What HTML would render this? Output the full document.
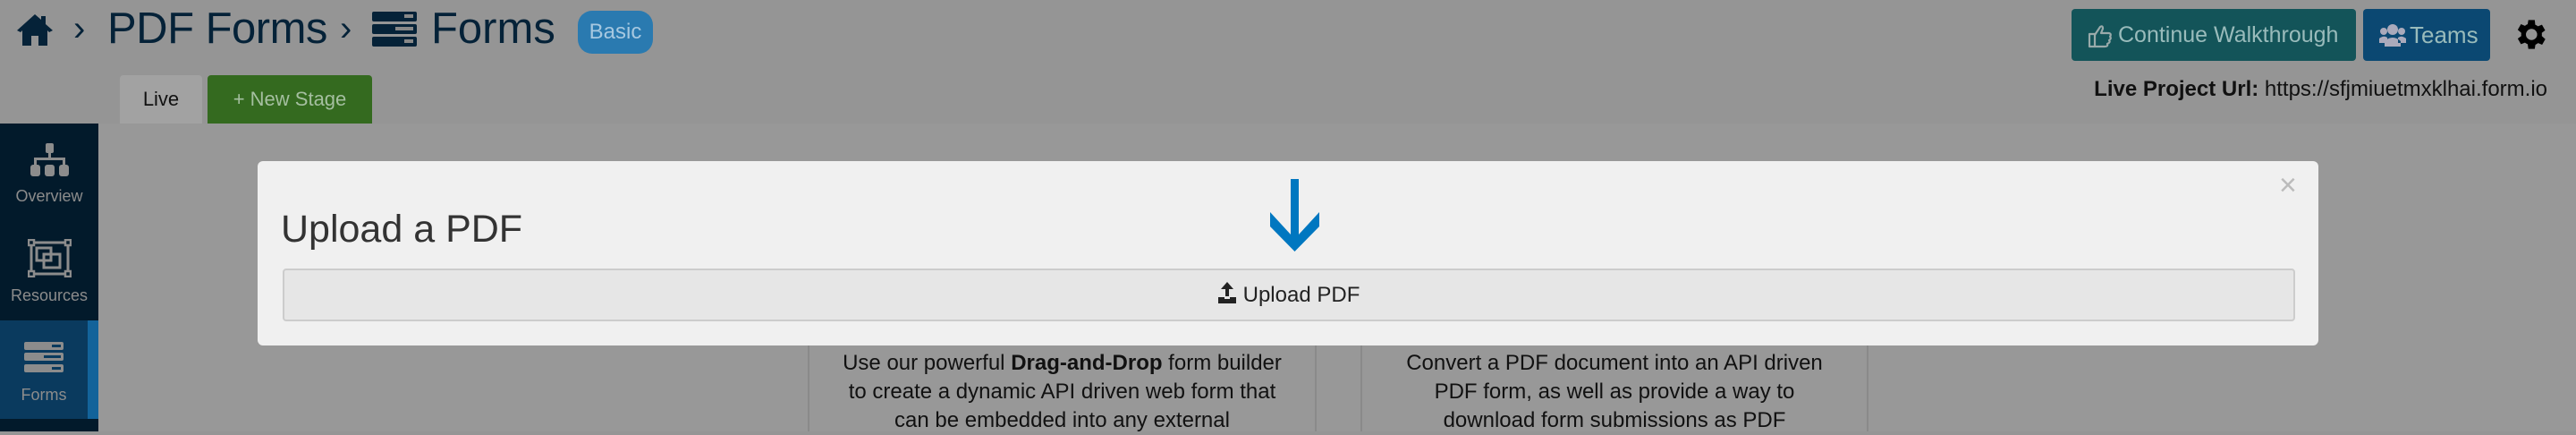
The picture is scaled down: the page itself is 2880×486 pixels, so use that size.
<!DOCTYPE html>
<html><head><meta charset="utf-8"><style>
*{margin:0;padding:0;box-sizing:border-box}
body{width:2880px;height:482px;overflow:hidden;background:#959595;font-family:"Liberation Sans",sans-serif;position:relative}
.a{position:absolute}
.side{left:0;top:138px;width:110px;height:344px;background:#021a2b}
.lbl{color:#8c8c8c;font-size:18px;text-align:center;width:110px;left:0}
.card{border-left:2px solid #8a8a8a;border-right:2px solid #8a8a8a;top:386px;height:96px;text-align:center;font-size:24px;line-height:32px;color:#111;padding-top:4px}
</style></head><body>
<div class="a" style="left:110px;top:138px;width:2770px;height:344px;background:#989898"></div>
<!-- header -->
<svg class="a" style="left:17px;top:14px" width="44" height="38" viewBox="0 0 44 38"><path d="M22 2 L2 20 L6 22 L8 20 V37 H18 V26 H26 V37 H36 V20 L38 22 L42 20 L34 13 V4 H29 V8 Z" fill="#052238"/></svg>
<div class="a" style="left:82px;top:10px;font-size:40px;color:#052238">›</div>
<div class="a" style="left:120px;top:4px;font-size:49px;color:#052238;letter-spacing:-0.5px">PDF Forms</div>
<div class="a" style="left:380px;top:10px;font-size:40px;color:#052238">›</div>
<svg class="a" style="left:416px;top:13px" width="50" height="40" viewBox="0 0 50 40"><rect x="0" y="0" width="50" height="11" rx="2" fill="#052238"/><rect x="0" y="14" width="50" height="11" rx="2" fill="#052238"/><rect x="0" y="28" width="50" height="11" rx="2" fill="#052238"/><rect x="36" y="3" width="10" height="4" fill="#888"/><rect x="26" y="17" width="20" height="4" fill="#888"/><rect x="36" y="31" width="10" height="4" fill="#888"/></svg>
<div class="a" style="left:482px;top:4px;font-size:49px;color:#052238">Forms</div>
<div class="a" style="left:646px;top:12px;width:84px;height:48px;border-radius:16px;background:#2a7ab0;color:#a6c8e0;font-size:24px;text-align:center;line-height:48px">Basic</div>
<div class="a" style="left:2316px;top:10px;width:318px;height:58px;border-radius:4px;background:#135459;color:#9bb;font-size:25px;line-height:58px;padding-left:52px;white-space:nowrap">Continue Walkthrough</div>
<svg class="a" style="left:2334px;top:26px" width="28" height="28" viewBox="0 0 28 28"><path d="M2 12 H8 V26 H2Z M8 13 L14 4 Q17 2 17 6 L15 11 H24 Q27 12 25 15 Q27 17 24 19 Q26 21 22 23 Q23 26 19 26 H8" fill="none" stroke="#9aa" stroke-width="2.2" stroke-linejoin="round"/></svg>
<div class="a" style="left:2642px;top:10px;width:142px;height:58px;border-radius:4px;background:#0b4872;color:#9bb;font-size:26px;line-height:58px;padding-left:52px">Teams</div>
<svg class="a" style="left:2660px;top:26px" width="30" height="26" viewBox="0 0 30 26"><circle cx="15" cy="7" r="6" fill="#aab"/><circle cx="5" cy="9" r="4" fill="#aab"/><circle cx="25" cy="9" r="4" fill="#aab"/><path d="M6 26 V20 Q15 12 24 20 V26Z M0 22 V17 Q5 13 9 16 V22Z M30 22 V17 Q25 13 21 16 V22Z" fill="#aab"/></svg>
<svg class="a" style="left:2807px;top:17px" width="43" height="43" viewBox="0 0 24 24"><path fill="#000" d="M19.4 13a7.5 7.5 0 0 0 0-2l2.1-1.6-2-3.5-2.5 1a7 7 0 0 0-1.700-1L15 3h-4l-.4 2.6a7 7 0 0 0-1.7 1l-2.5-1-2 3.5L6.6 11a7.5 7.5 0 0 0 0 2l-2.2 1.6 2 3.5 2.5-1a7 7 0 0 0 1.7 1L11 21h4l.4-2.6a7 7 0 0 0 1.7-1l2.5 1 2-3.5zM13 15.5A3.5 3.5 0 1 1 13 8.5a3.5 3.5 0 0 1 0 7z"/></svg>
<div class="a" style="right:32px;top:86px;font-size:24px;color:#111"><b>Live Project Url:</b> https://sfjmiuetmxklhai.form.io</div>
<!-- tabs -->
<div class="a" style="left:134px;top:84px;width:92px;height:54px;background:#a2a2a2;border-radius:4px 4px 0 0;font-size:22px;line-height:54px;text-align:center;color:#111">Live</div>
<div class="a" style="left:232px;top:84px;width:184px;height:54px;background:#346a1f;border-radius:4px 4px 0 0;font-size:22px;line-height:54px;text-align:center;color:#a5bfa0">+ New Stage</div>
<!-- sidebar -->
<div class="a side"></div>
<svg class="a" style="left:34px;top:160px" width="43" height="37" viewBox="0 0 43 37"><g fill="#8c8c8c"><rect x="17" y="0" width="9" height="11" rx="2"/><rect x="20" y="11" width="3" height="8"/><rect x="4" y="16" width="35" height="3"/><rect x="4" y="16" width="3" height="8"/><rect x="36" y="16" width="3" height="8"/><rect x="0" y="24" width="11" height="13" rx="3"/><rect x="16" y="24" width="11" height="13" rx="3"/><rect x="32" y="24" width="11" height="13" rx="3"/></g></svg>
<div class="a lbl" style="top:209px">Overview</div>
<svg class="a" style="left:31px;top:267px" width="49" height="43" viewBox="0 0 49 43"><g fill="none" stroke="#8c8c8c" stroke-width="3"><rect x="4" y="4" width="41" height="35"/><rect x="10" y="10" width="16" height="14"/><rect x="18" y="17" width="18" height="15"/></g><g fill="#021a2b" stroke="#8c8c8c" stroke-width="2.5"><rect x="1" y="1" width="6" height="6"/><rect x="42" y="1" width="6" height="6"/><rect x="1" y="36" width="6" height="6"/><rect x="42" y="36" width="6" height="6"/></g></svg>
<div class="a lbl" style="top:320px">Resources</div>
<div class="a" style="left:0;top:358px;width:110px;height:110px;background:#0a3a5e"></div>
<div class="a" style="left:98px;top:358px;width:12px;height:110px;background:#13639a"></div>
<svg class="a" style="left:27px;top:382px" width="44" height="34" viewBox="0 0 44 34"><g fill="#8c8c8c"><rect y="0" width="44" height="9" rx="2"/><rect y="12" width="44" height="9" rx="2"/><rect y="25" width="44" height="9" rx="2"/></g><g fill="#0a3a5e"><rect x="31" y="3" width="10" height="3"/><rect x="22" y="15" width="19" height="3"/><rect x="31" y="28" width="10" height="3"/></g></svg>
<div class="a lbl" style="top:431px;width:98px">Forms</div>
<!-- cards -->
<div class="a card" style="left:903px;width:569px">Use our powerful <b>Drag-and-Drop</b> form builder<br>to create a dynamic API driven web form that<br>can be embedded into any external</div>
<div class="a card" style="left:1521px;width:568px">Convert a PDF document into an API driven<br>PDF form, as well as provide a way to<br>download form submissions as PDF</div>
<!-- modal -->
<div class="a" style="left:288px;top:180px;width:2304px;height:206px;background:#f0f0f0;border-radius:6px"></div>
<div class="a" style="left:2548px;top:188px;font-size:34px;color:#bbb">×</div>
<div class="a" style="left:314px;top:232px;font-size:43px;color:#333">Upload a PDF</div>
<svg class="a" style="left:1420px;top:200px" width="55" height="82" viewBox="0 0 55 82"><path d="M0 37 L23 62 V0 H32 V62 L55 37 V53 L27.5 81 L0 53Z" fill="#0077c0"/></svg>
<div class="a" style="left:316px;top:300px;width:2250px;height:59px;background:#e6e6e6;border:2px solid #ccc;border-radius:4px;font-size:24px;line-height:55px;text-align:center;color:#222"><span style="display:inline-block;width:22px;height:22px;vertical-align:-2px;margin-right:6px;position:relative"><svg width="20" height="24" viewBox="0 0 20 24" style="position:absolute;left:0;top:-2px"><path d="M10 0 L17 8 H12 V16 H8 V8 H3Z M0 17 H7 V19 H13 V17 H20 V24 H0Z" fill="#222"/></svg></span>Upload PDF</div>
</body></html>
